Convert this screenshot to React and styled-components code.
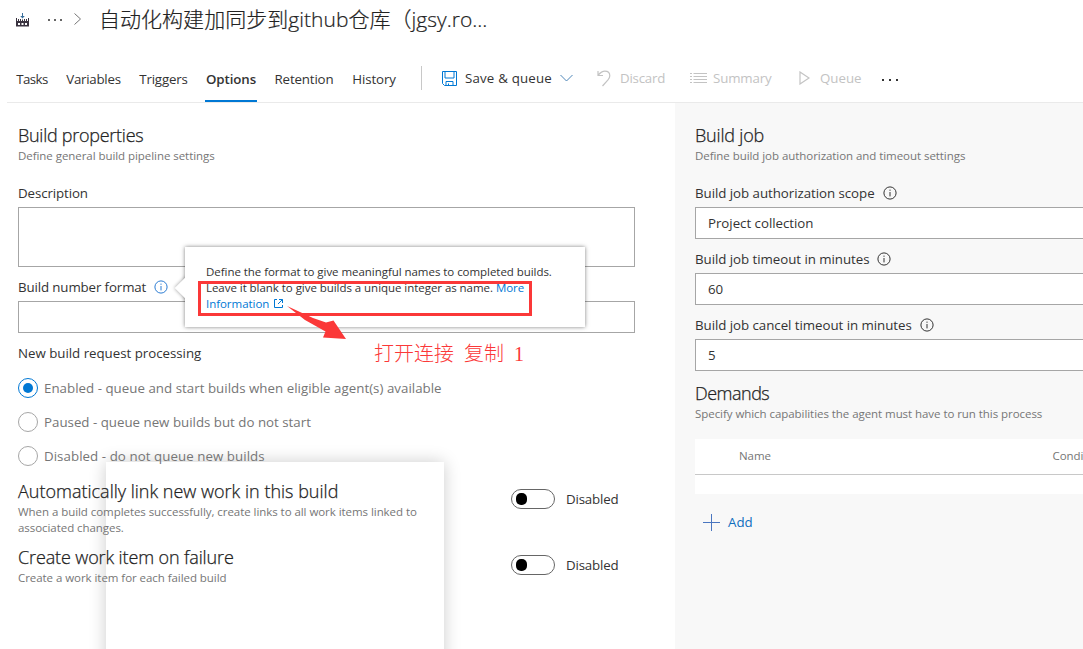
import React from "react";
import styled, { createGlobalStyle } from "styled-components";

const GlobalStyle = createGlobalStyle`
  * { box-sizing: border-box; }
  body {
    margin: 0;
    background: #fff;
    color: #333;
    font-family: "Open Sans", "Noto Sans CJK SC", sans-serif;
    overflow: hidden;
  }
  svg { display: block; flex: none; }
`;

const Page = styled.div`
  position: relative;
  width: 100%;
  height: 649px;
  display: flex;
  flex-direction: column;
  overflow: hidden;
`;

const Text = styled.span`
  font-size: 13.3px;
  line-height: 20px;
  white-space: nowrap;
  letter-spacing: ${(p) => p.$ls || 0}px;
`;

const Breadcrumb = styled.header`
  height: 40px;
  padding: 0 0 2px 16px;
  display: flex;
  align-items: center;
`;

const Crumbs = styled.div`
  display: flex;
  align-items: center;
  width: 83px;
`;

const Dots = styled.span`
  display: flex;
  gap: ${(p) => p.$gap}px;
  margin: ${(p) => p.$margin};
  &::before, &::after, i {
    content: "";
    width: 2px;
    height: 2px;
    background: ${(p) => p.$color};
  }
`;

const PageTitle = styled.h1`
  margin: 0;
  font-size: 21px;
  line-height: 30px;
  font-weight: 300;
  letter-spacing: 0.03px;
  color: #222;
  -webkit-text-stroke: 0.2px #222;
  white-space: nowrap;
`;

const CommandBar = styled.nav`
  height: 63px;
  margin-left: 7px;
  padding-left: 9px;
  border-bottom: 1px solid #eaeaea;
  display: flex;
`;

const Tab = styled.a`
  width: ${(p) => p.$w}px;
  height: 62px;
  margin-right: ${(p) => p.$gap}px;
  padding-top: 29px;
  display: flex;
  justify-content: center;
  border-bottom: 2px solid ${(p) => (p.$active ? "#0078d4" : "transparent")};
  font-weight: ${(p) => (p.$active ? 600 : 400)};
`;

const Commands = styled.div`
  display: flex;
  align-items: center;
  height: 24px;
  margin-top: 26px;
  padding-left: 20px;
  border-left: 1px solid #c8c8c8;
`;

const Command = styled.div`
  display: flex;
  align-items: center;
  width: ${(p) => p.$w}px;
  gap: ${(p) => p.$gap}px;
  color: ${(p) => (p.$disabled ? "#c3c3c3" : "#333")};
`;

const Main = styled.main`
  flex: 1;
  display: grid;
  grid-template-columns: 675px 1fr;
`;

const Panel = styled.section`
  position: relative;
  padding: 22px 0 0 ${(p) => p.$left}px;
  background: ${(p) => (p.$shade ? "#f8f8f8" : "transparent")};
  overflow: hidden;
  display: flex;
  flex-direction: column;
`;

const Heading = styled.h2`
  margin: ${(p) => p.$top || 0}px 0 3px;
  font-size: 18px;
  line-height: 20px;
  font-weight: 300;
  color: #222;
  -webkit-text-stroke: 0.25px #222;
  white-space: nowrap;
  letter-spacing: ${(p) => p.$ls || 0}px;
`;

const Hint = styled.p`
  margin: 0;
  font-size: 11.5px;
  line-height: 16px;
  letter-spacing: -0.055px;
  color: #767676;
  white-space: nowrap;
`;

const Label = styled.label`
  display: flex;
  align-items: center;
  gap: 8px;
  height: 20px;
  margin: ${(p) => p.$top}px 0 4px;
`;

const Field = styled.div`
  width: 617px;
  height: ${(p) => p.$h}px;
  padding-left: 12px;
  display: flex;
  align-items: center;
  background: #fff;
  border: 1px solid #a6a6a6;
`;

const RadioList = styled.div`
  display: flex;
  flex-direction: column;
  gap: 14px;
  margin: 11px 0 15px;
`;

const Radio = styled.div`
  display: flex;
  align-items: center;
  gap: 6px;
  height: 20px;
  color: #767676;
`;

const RadioDot = styled.span`
  width: 20px;
  height: 20px;
  border-radius: 50%;
  border: 1px solid ${(p) => (p.$on ? "#0078d4" : "#a6a6a6")};
  display: grid;
  place-items: center;
  &::after {
    content: "";
    width: 10px;
    height: 10px;
    border-radius: 50%;
    background: ${(p) => (p.$on ? "#0078d4" : "transparent")};
  }
`;

const Setting = styled.div`
  display: grid;
  grid-template-columns: 493px 1fr;
  margin-bottom: 11px;
`;

const Toggle = styled.div`
  display: flex;
  gap: 11px;
  height: 20px;
  margin-top: 8px;
`;

const Track = styled.span`
  width: 44px;
  height: 20px;
  border-radius: 10px;
  border: 1px solid #666;
  padding: 3px 0 0 4px;
  &::after {
    content: "";
    display: block;
    width: 11px;
    height: 12px;
    border-radius: 5px;
    background: #000;
  }
`;

const Table = styled.div`
  width: 600px;
  height: 55px;
  margin-top: 17px;
  background: #fff;
`;

const TableHead = styled.div`
  display: grid;
  grid-template-columns: 313.5px 1fr;
  align-items: center;
  height: 36px;
  padding: 0 0 2px 44px;
  border-bottom: 1px solid #c8c8c8;
`;

const AddButton = styled.div`
  display: flex;
  align-items: center;
  gap: 8px;
  margin: 18px 0 0 8px;
  color: #106ebe;
`;

const Ghost = styled.div`
  position: absolute;
  z-index: 0;
  left: 106px;
  top: 462px;
  width: 338px;
  height: 220px;
  box-shadow: 0 0 16px rgba(0, 0, 0, 0.2);
  background: #fff;
`;

const Callout = styled.div`
  position: absolute;
  z-index: 3;
  left: 185px;
  top: 247px;
  width: 400px;
  height: 80px;
  padding: 17px 21px;
  background: #fff;
  box-shadow: 0 0 4px rgba(0, 0, 0, 0.5);
  &::before {
    content: "";
    position: absolute;
    left: -7px;
    top: 33px;
    width: 16px;
    height: 16px;
    background: #fff;
    box-shadow: 0 0 4px rgba(0, 0, 0, 0.4);
    transform: rotate(45deg);
  }
  &::after {
    content: "";
    position: absolute;
    left: 0;
    top: 20px;
    width: 14px;
    height: 42px;
    background: #fff;
  }
`;

const CalloutText = styled.div`
  position: relative;
  z-index: 1;
  font-size: 11.5px;
  line-height: 16px;
  letter-spacing: -0.045px;
  white-space: nowrap;
  a { color: #0078d4; }
  svg { display: inline-block; margin-left: 2px; vertical-align: 0; }
`;

const Highlight = styled.div`
  position: absolute;
  z-index: 4;
  left: 198px;
  top: 281px;
  width: 334px;
  height: 35px;
  border: 3px solid #fb3838;
`;

const Arrow = styled.svg`
  position: absolute;
  z-index: 5;
  left: 285px;
  top: 304px;
`;

const Note = styled.div`
  position: absolute;
  z-index: 4;
  left: 374px;
  top: 341px;
  font-family: "Liberation Serif", "Noto Sans CJK SC", serif;
  font-weight: 300;
  font-size: 20px;
  line-height: 26px;
  white-space: pre;
  color: #fb3838;
  word-spacing: 5px;
`;

const Info = ({ color = "#333" }) => (
  <svg width="14" height="14" viewBox="0 0 14 14" fill="none" stroke={color}>
    <circle cx="7" cy="7" r="6.1" />
    <path d="M7 6v4.4M7 3.6v1.2" />
  </svg>
);

const PipelineIcon = () => (
  <svg width="13" height="15" viewBox="0 0 13 15">
    <path d="M6 1h1v3h1.800L6.500 6.500 4.200 4H6z" fill="#3a6f9c" />
    <path d="M0 6h1v3h11V6h1v8.500H0z" fill="#3a3340" />
    <path d="M2 7h1v2H2zM4 7h1v2H4zM6 7.500h1V9H6zM8 7h1v2H8zM10 7h1v2h-1z" fill="#3a3340" />
    <path d="M2 11h2v2H2zM5.500 11h2v2h-2zM9 11h2v2H9z" fill="#fff" />
  </svg>
);

const SaveIcon = () => (
  <svg width="15" height="15" viewBox="0 0 15 15" fill="none" stroke="#0078d4">
    <path d="M.5.5h14v14H2.500L.5 12.500zM3 .5v6.500h9V.5M4 14.500v-4h7v4M6.500 14.500v-2" />
  </svg>
);

const Chevron = ({ w, h, d, color = "#767676" }) => (
  <svg width={w} height={h} fill="none" stroke={color}>
    <path d={d} />
  </svg>
);

const UndoIcon = () => (
  <svg width="14" height="17" viewBox="0 0 14 17" fill="none" stroke="#c3c3c3" strokeWidth="1.200">
    <path d="M1 1v4.500h5M1.200 5.200C3.500 2.500 5 1.200 7.800 1.200c3 0 5 2 5 4.600 0 1.700-.7 2.800-1.800 4L5.500 16" />
  </svg>
);

const ListIcon = () => (
  <svg width="17" height="12" viewBox="0 0 17 12" stroke="#c3c3c3">
    <path d="M0 1.500h2M0 4.500h2M0 7.500h2M0 10.500h2M3.500 1.500H17M3.500 4.500H17M3.500 7.500H17M3.500 10.500H17" />
  </svg>
);

const PlayIcon = () => (
  <svg width="11" height="14" viewBox="0 0 11 14" fill="none" stroke="#c3c3c3" strokeWidth="1.200">
    <path d="M1 1v12l9-6z" />
  </svg>
);

const TABS = [
  ["Tasks", 32, 18, -0.58],
  ["Variables", 55, 18, -0.26],
  ["Triggers", 49, 17, -0.16],
  ["Options", 52, 17, -0.1],
  ["Retention", 60, 18, -0.15],
  ["History", 44, 25, -0.12],
];

const RADIOS = [
  ["Enabled - queue and start builds when eligible agent(s) available", 0.025],
  ["Paused - queue new builds but do not start", 0],
  ["Disabled - do not queue new builds", 0.06],
];

const JOB_FIELDS = [
  ["Build job authorization scope", "Project collection"],
  ["Build job timeout in minutes", "60"],
  ["Build job cancel timeout in minutes", "5"],
];

const DisabledToggle = () => (
  <Toggle>
    <Track />
    <Text $ls={-0.17}>Disabled</Text>
  </Toggle>
);

export default function App() {
  return (
    <Page>
      <GlobalStyle />
      <Ghost />
      <Breadcrumb>
        <Crumbs>
          <PipelineIcon />
          <Dots $gap={4} $color="#666" $margin="1px 12px 0 19px"><i /></Dots>
          <Chevron w={8} h={12} d="M.5.5l6 5.500-6 5.500" />
        </Crumbs>
        <PageTitle>自动化构建加同步到github仓库（jgsy.ro...</PageTitle>
      </Breadcrumb>
      <CommandBar>
        {TABS.map(([name, w, gap, ls]) => (
          <Tab key={name} $w={w} $gap={gap} $active={name === "Options"}>
            <Text $ls={ls}>{name}</Text>
          </Tab>
        ))}
        <Commands>
          <Command $w={155} $gap={8}>
            <SaveIcon />
            <Text $ls={0.18}>Save &amp; queue</Text>
            <Chevron w={13} h={8} d="M.5 1l6 6 6-6" color="#4f86b8" />
          </Command>
          <Command $w={93} $gap={9} $disabled>
            <UndoIcon />
            <Text $ls={-0.23}>Discard</Text>
          </Command>
          <Command $w={109} $gap={6} $disabled>
            <ListIcon />
            <Text $ls={-0.15}>Summary</Text>
          </Command>
          <Command $w={83} $gap={10} $disabled>
            <PlayIcon />
            <Text>Queue</Text>
          </Command>
          <Dots $gap={5} $color="#333" $margin="4px 0 0"><i /></Dots>
        </Commands>
      </CommandBar>
      <Main>
        <Panel $left={18}>
          <Heading $ls={-0.27}>Build properties</Heading>
          <Hint>Define general build pipeline settings</Hint>
          <Label $top={19}><Text $ls={-0.1}>Description</Text></Label>
          <Field $h={60} />
          <Label $top={10}>
            <Text $ls={-0.12}>Build number format</Text>
            <Info color="#2b7cd3" />
          </Label>
          <Field $h={32} />
          <Label $top={10}><Text $ls={-0.02}>New build request processing</Text></Label>
          <RadioList>
            {RADIOS.map(([name, ls], i) => (
              <Radio key={name}>
                <RadioDot $on={i === 0} />
                <Text $ls={ls}>{name}</Text>
              </Radio>
            ))}
          </RadioList>
          <Setting>
            <div>
              <Heading>Automatically link new work in this build</Heading>
              <Hint>When a build completes successfully, create links to all work items linked to<br />associated changes.</Hint>
            </div>
            <DisabledToggle />
          </Setting>
          <Setting>
            <div>
              <Heading $ls={-0.13}>Create work item on failure</Heading>
              <Hint>Create a work item for each failed build</Hint>
            </div>
            <DisabledToggle />
          </Setting>
        </Panel>
        <Panel $left={20} $shade>
          <Heading $ls={-0.18}>Build job</Heading>
          <Hint>Define build job authorization and timeout settings</Hint>
          {JOB_FIELDS.map(([label, value], i) => (
            <React.Fragment key={label}>
              <Label $top={i ? 10 : 19}>
                <Text $ls={-0.045}>{label}</Text>
                <Info />
              </Label>
              <Field $h={32}><Text $ls={-0.03}>{value}</Text></Field>
            </React.Fragment>
          ))}
          <Heading $ls={-0.5} $top={12}>Demands</Heading>
          <Hint>Specify which capabilities the agent must have to run this process</Hint>
          <Table>
            <TableHead>
              <Hint>Name</Hint>
              <Hint>Condition</Hint>
            </TableHead>
          </Table>
          <AddButton>
            <svg width="17" height="17" stroke="#4a76c0"><path d="M8.500 0v17M0 8.500h17" /></svg>
            <Text>Add</Text>
          </AddButton>
        </Panel>
      </Main>
      <Callout>
        <CalloutText>
          Define the format to give meaningful names to completed builds.<br />
          Leave it blank to give builds a unique integer as name. <a>More</a><br />
          <a>Information</a>{" "}
          <svg width="9" height="9" viewBox="0 0 9 9" fill="none" stroke="#0078d4">
            <path d="M3 .5H.5v8h8V6M5 .5h3.500V4M8.500.5L4 5" />
          </svg>
        </CalloutText>
      </Callout>
      <Highlight />
      <Arrow width="64" height="38" viewBox="0 0 64 38" fill="#fb3838">
        <path d="M2 2l26 12 13 4.500 7.500-2L61 35 38 33.500 40.500 27.500 20 16z" />
      </Arrow>
      <Note>打开连接 复制 1</Note>
    </Page>
  );
}
